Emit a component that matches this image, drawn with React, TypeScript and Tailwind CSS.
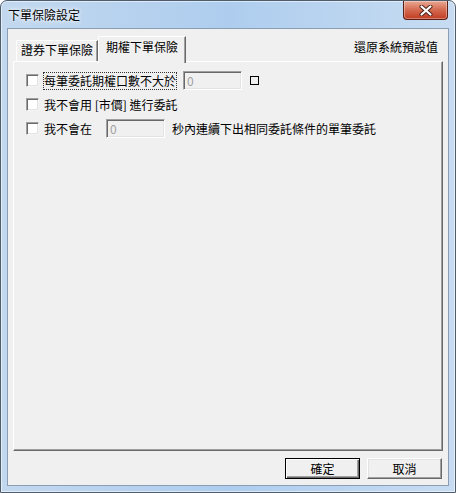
import React from "react";

function Checkbox() {
  return (
    <span className="block w-[13px] h-[13px] shrink-0 bg-white border border-t-[#a0a0a0] border-l-[#a0a0a0] border-r-[#f4f4f4] border-b-[#f4f4f4] shadow-[inset_1px_1px_0_#696969,inset_-1px_-1px_0_#e3e3e3]" />
  );
}

function DisabledInput({ w }: { w: string }) {
  return (
    <div
      className={`${w} h-[19px] shrink-0 flex items-center pl-[3px] bg-[#f0f0f0] border border-t-[#a0a0a0] border-l-[#a0a0a0] border-r-white border-b-white shadow-[inset_1px_1px_0_#696969,inset_-1px_-1px_0_#e3e3e3] text-[#a0a0a0] leading-[14px]`}
    >
      0
    </div>
  );
}

export default function App() {
  return (
    <div className="w-[456px] h-[493px] flex flex-col rounded-t-[7px] border border-[#4e5c6c] bg-gradient-to-r from-[#c2d8ef] via-[#aecdee] to-[#c7dcf2] shadow-[inset_0_0_0_1px_rgba(255,255,255,0.55)] font-['Noto_Sans_CJK_TC','Noto_Sans_CJK_SC',sans-serif] text-[12px] text-black overflow-hidden">
      {/* Title bar */}
      <div className="h-[27px] shrink-0 flex items-start">
        <div className="pl-[7px] pt-[7px] leading-[14px] [text-shadow:0_0_6px_#fff,0_0_3px_#fff]">
          下單保險設定
        </div>
        <div className="ml-auto mr-[7px] w-[45px] h-[19px] rounded-b-[4px] border border-t-0 border-[#5a1e14] bg-gradient-to-b from-[#e8a894] via-[#d4694f] to-[#c03a20] shadow-[inset_0_0_0_1px_rgba(255,255,255,0.35)] flex items-center justify-center">
          <svg width="14" height="11" viewBox="0 0 14 11">
            <path d="M2.5 1.5 L11.5 9.5 M11.5 1.5 L2.5 9.5" stroke="#4a2018" strokeWidth="4" strokeLinecap="round" />
            <path d="M2.5 1.5 L11.5 9.5 M11.5 1.5 L2.5 9.5" stroke="#ffffff" strokeWidth="2.2" strokeLinecap="round" />
          </svg>
        </div>
      </div>

      {/* Client area */}
      <div className="mx-[6px] h-[458px] border border-[#8b9db3] bg-[#f0f0f0] flex flex-col">
        {/* Tab header */}
        <div className="h-[32px] shrink-0 flex items-end pl-[8px] pr-[10px]">
          <div className="w-[82px] h-[21px] flex items-center justify-center pb-[2px] border-t border-l border-r border-t-white border-l-white border-r-[#696969] shadow-[inset_-1px_0_0_#a0a0a0] rounded-tl-[2px] leading-[14px]">
            證券下單保險
          </div>
          <div className="relative z-10 w-[88px] h-[27px] mb-[-2px] flex items-start justify-center pt-[3px] bg-[#f0f0f0] border-t border-l border-r border-t-white border-l-white border-r-[#696969] shadow-[inset_-1px_0_0_#a0a0a0] rounded-tl-[2px] leading-[14px]">
            期權下單保險
          </div>
          <div className="ml-auto self-start mt-[11px] leading-[14px]">還原系統預設值</div>
        </div>

        {/* Tab pane */}
        <div className="mx-[5px] h-[390px] shrink-0 border border-t-white border-l-white border-r-[#696969] border-b-[#696969] shadow-[inset_-1px_-1px_0_#a0a0a0] pl-[12px] pt-[9px] flex flex-col">
          <div className="h-[19px] flex items-center">
            <Checkbox />
            <span className="ml-[4px] border border-dotted border-[#333] leading-[16px]">每筆委託期權口數不大於</span>
            <div className="ml-[6px]">
              <DisabledInput w="w-[59px]" />
            </div>
            <span className="ml-[8px] w-[9px] h-[9px] border border-black" />
          </div>
          <div className="h-[19px] mt-[5px] flex items-center">
            <Checkbox />
            <span className="ml-[4px] border border-transparent leading-[16px]">我不會用 [市價] 進行委託</span>
          </div>
          <div className="h-[19px] mt-[5px] flex items-center">
            <Checkbox />
            <span className="ml-[4px] border border-transparent leading-[16px]">我不會在</span>
            <div className="ml-[13px]">
              <DisabledInput w="w-[59px]" />
            </div>
            <span className="ml-[7px] leading-[16px]">秒內連續下出相同委託條件的單筆委託</span>
          </div>
        </div>

        {/* Buttons */}
        <div className="mt-[7px] flex justify-end gap-[7px] pr-[6px]">
          <div className="w-[75px] h-[21px] flex items-center justify-center border border-black shadow-[inset_1px_1px_0_#fff,inset_-1px_-1px_0_#696969,inset_-2px_-2px_0_#a0a0a0] leading-[14px]">
            確定
          </div>
          <div className="w-[75px] h-[21px] flex items-center justify-center border border-t-white border-l-white border-r-[#696969] border-b-[#696969] shadow-[inset_-1px_-1px_0_#a0a0a0,inset_1px_1px_0_#e3e3e3] leading-[14px]">
            取消
          </div>
        </div>
      </div>
    </div>
  );
}
